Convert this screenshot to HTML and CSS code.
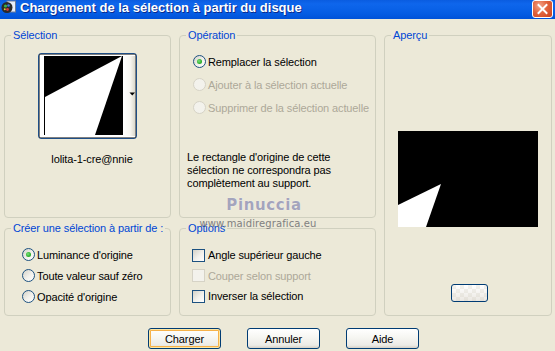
FILE: index.html
```html
<!DOCTYPE html>
<html lang="fr">
<head>
<meta charset="utf-8">
<title>Chargement de la sélection à partir du disque</title>
<link rel="stylesheet" href="styles.css">
</head>
<body>
<div class="window">
  <div class="titlebar">
    <svg class="app-icon" viewBox="0 0 15 14" width="15" height="14">
      <rect x="6" y="1" width="8.5" height="11" fill="#e8eef8" stroke="#6c7d9a" stroke-width="1"/>
      <circle cx="6" cy="7.5" r="5.5" fill="#2a2a2a"/>
      <circle cx="4.5" cy="6" r="1.6" fill="#37b34a"/>
      <circle cx="7.5" cy="5.5" r="1.3" fill="#3c7be0"/>
      <circle cx="6.5" cy="9.5" r="1.4" fill="#d23a3a"/>
      <circle cx="3.8" cy="9.2" r="1" fill="#e6c531"/>
    </svg>
    <span class="title">Chargement de la sélection à partir du disque</span>
    <span class="close">
      <svg viewBox="0 0 21 18" width="21" height="18">
        <path d="M6 4.5 L15 13.5 M15 4.5 L6 13.5" stroke="#fff" stroke-width="2.2" stroke-linecap="square"/>
      </svg>
    </span>
  </div>

  <div class="main">
    <div class="groups">
      <fieldset class="group sel">
        <legend>Sélection</legend>
        <div class="thumb">
          <svg viewBox="0 0 97 84" width="97" height="84">
            <defs>
              <linearGradient id="strip" x1="0" x2="1" y1="0" y2="0">
                <stop offset="0" stop-color="#ffffff"/>
                <stop offset="0.6" stop-color="#f7f6f1"/>
                <stop offset="1" stop-color="#dcd9cc"/>
              </linearGradient>
            </defs>
            <rect x="84" y="2" width="12" height="80" fill="url(#strip)"/>
            <rect x="5" y="2" width="79" height="79" fill="#000"/>
            <polygon points="6,43 83,2 56,81 6,81" fill="#fff"/>
            <polygon points="90.5,38.5 96,38.5 93.25,41.5" fill="#000"/>
            <rect x="0.5" y="0.5" width="96" height="83" fill="none" stroke="#000" stroke-width="1" stroke-dasharray="1 1"/>
          </svg>
        </div>
        <div class="thumb-name">lolita-1-cre@nnie</div>
      </fieldset>

      <fieldset class="group op">
        <legend>Opération</legend>
        <div class="opts op-opts">
          <div class="opt checked"><span class="rb"></span>Remplacer la sélection</div>
          <div class="opt disabled"><span class="rb"></span>Ajouter à la sélection actuelle</div>
          <div class="opt disabled"><span class="rb"></span>Supprimer de la sélection actuelle</div>
        </div>
        <p class="note">Le rectangle d'origine de cette<br>sélection ne correspondra pas<br>complètement au support.</p>
      </fieldset>

      <fieldset class="group preview">
        <legend>Aperçu</legend>
        <svg class="preview-img" viewBox="0 0 140 96" width="140" height="96">
          <rect width="140" height="96" fill="#000"/>
          <polygon points="0,74 43,53 28,96 0,96" fill="#fff"/>
        </svg>
        <span class="btn mini"></span>
      </fieldset>

      <fieldset class="group create">
        <legend>Créer une sélection à partir de :</legend>
        <div class="opts create-opts">
          <div class="opt checked"><span class="rb"></span>Luminance d'origine</div>
          <div class="opt"><span class="rb"></span>Toute valeur sauf zéro</div>
          <div class="opt"><span class="rb"></span>Opacité d'origine</div>
        </div>
      </fieldset>

      <fieldset class="group options">
        <legend>Options</legend>
        <div class="opts check-opts">
          <div class="opt"><span class="cb"></span>Angle supérieur gauche</div>
          <div class="opt disabled"><span class="cb"></span>Couper selon support</div>
          <div class="opt"><span class="cb"></span>Inverser la sélection</div>
        </div>
      </fieldset>
    </div>

    <div class="buttons">
      <span class="btn default">Charger</span>
      <span class="btn">Annuler</span>
      <span class="btn">Aide</span>
    </div>
  </div>

  <div class="watermark">
    <span class="wm-name">Pinuccia</span>
    <span class="wm-url">www.maidiregrafica.eu</span>
  </div>
</div>
</body>
</html>
```

FILE: styles.css
```css
html, body {
  margin: 0;
  padding: 0;
  background: #ECE9D8;
}

body {
  font-family: "Liberation Sans", Arial, sans-serif;
  font-size: 11px;
  letter-spacing: -0.12px;
  color: #000;
}

.window {
  width: 555px;
  height: 351px;
  overflow: hidden;
  position: relative;
  background: #ECE9D8;
}

/* ---------- Title bar ---------- */
.titlebar {
  height: 19px;
  display: flex;
  align-items: flex-start;
  background: linear-gradient(to bottom,
    #0A5CE0 0%, #0E66EC 20%, #0A62E8 45%, #045BE2 75%, #0052D8 100%);
  color: #fff;
}

.app-icon {
  flex: none;
  margin: 0 4px 0 1px;
}

.title {
  font-family: "Liberation Sans", Arial, sans-serif;
  font-weight: bold;
  font-size: 13px;
  line-height: 15px;
  letter-spacing: 0;
  white-space: nowrap;
  text-shadow: 1px 1px 0 #0A2B8C;
}

.close {
  flex: none;
  margin-left: auto;
  margin-right: 2px;
  width: 21px;
  height: 18px;
  box-sizing: border-box;
  border: 1px solid #fff;
  border-radius: 3px;
  background: radial-gradient(circle at 35% 30%, #F4A58B 0%, #E2643E 45%, #C9401A 100%);
  display: flex;
}

.close svg {
  width: 19px;
  height: 16px;
}

/* ---------- Main layout ---------- */
.main {
  padding: 10px 3px 0 4px;
}

.groups {
  display: grid;
  grid-template-columns: 167px 197px 168px;
  grid-template-rows: 189px 94px;
  column-gap: 8px;
  row-gap: 4px;
}

.group {
  margin: 0;
  padding: 0;
  min-width: 0;
  border: 1px solid #D0D0BF;
  border-radius: 4px;
  box-sizing: border-box;
}

.group legend {
  margin-left: 6px;
  padding: 0 2px;
  font-size: 11px;
  line-height: 13px;
  color: #0046D5;
  white-space: nowrap;
}

.sel { grid-column: 1; grid-row: 1; }
.op { grid-column: 2; grid-row: 1; }
.preview { grid-column: 3; grid-row: 1 / span 2; }
.create { grid-column: 1; grid-row: 2; }
.options { grid-column: 2; grid-row: 2; }

/* ---------- Selection thumbnail ---------- */
.thumb {
  width: 99px;
  height: 86px;
  box-sizing: border-box;
  margin: 11px auto 0;
  border: 1px solid #1E4E86;
  border-radius: 3px;
  background: #fff;
  display: flex;
}

.thumb-name {
  margin-top: 14px;
  text-align: center;
  padding-left: 9px;
  line-height: 13px;
}

/* ---------- Radio / checkbox options ---------- */
.opts {
  display: flex;
  flex-direction: column;
}

.opt {
  display: flex;
  align-items: center;
  gap: 2px;
  white-space: nowrap;
}

.op-opts {
  padding: 8px 0 0 13px;
}

.op-opts .opt {
  height: 23px;
}

.create-opts {
  padding: 9px 0 0 17px;
}

.create-opts .opt {
  height: 21px;
}

.check-opts {
  padding: 10px 0 0 12px;
}

.check-opts .opt {
  height: 20.5px;
  gap: 3px;
}

.rb {
  flex: none;
  position: relative;
  width: 13px;
  height: 13px;
  box-sizing: border-box;
  border: 1px solid #1C5180;
  border-radius: 50%;
  background: linear-gradient(135deg, #D4D2C8 0%, #F2F1EC 55%, #FFFFFF 100%);
}

.checked .rb::after {
  content: "";
  position: absolute;
  left: 3px;
  top: 3px;
  width: 5px;
  height: 5px;
  border-radius: 50%;
  background: radial-gradient(circle at 40% 40%, #7BE07B 0%, #2DB02D 60%, #1E8E1E 100%);
}

.cb {
  flex: none;
  width: 13px;
  height: 13px;
  box-sizing: border-box;
  border: 1px solid #1C5180;
  background: linear-gradient(135deg, #D4D2C8 0%, #F2F1EC 55%, #FFFFFF 100%);
}

.disabled {
  color: #ACA899;
}

.disabled .rb,
.disabled .cb {
  border-color: #D6D3C6;
  background: #F3F2EC;
}

.note {
  margin: 32px 0 0 7px;
  line-height: 13px;
}

/* ---------- Preview ---------- */
.preview {
  display: flex;
  flex-direction: column;
  align-items: center;
}

.preview-img {
  margin-top: 89px;
  flex: none;
}

/* ---------- Buttons ---------- */
.btn {
  box-sizing: border-box;
  display: flex;
  align-items: center;
  justify-content: center;
  width: 73px;
  height: 21px;
  border: 1px solid #003C74;
  border-radius: 3px;
  background: linear-gradient(to bottom, #FFFFFF 0%, #F7F7F3 40%, #ECEBE6 85%, #D6D0C5 100%);
  font-size: 11px;
  color: #000;
}

.btn.default {
  box-shadow: inset 0 0 0 1px #FFE7A2, inset 0 0 0 2px #F6B24A;
}

.btn.mini {
  width: 37px;
  height: 18px;
  margin: 57px 0 0 3px;
  background:
    linear-gradient(to bottom, rgba(255,255,255,0.2), rgba(214,208,197,0.5)),
    repeating-conic-gradient(#FFFFFF 0 25%, #F0EFEA 0 50%) 0 0 / 8px 8px;
}

.buttons {
  display: flex;
  gap: 26px;
  padding: 12px 0 0 144px;
}

/* ---------- Watermark overlay ---------- */
.watermark {
  position: absolute;
  left: 196px;
  top: 196px;
  width: 124px;
  display: flex;
  flex-direction: column;
  align-items: center;
  pointer-events: none;
}

.wm-name {
  font-family: "DejaVu Sans", Verdana, sans-serif;
  font-weight: bold;
  font-size: 15px;
  line-height: 18px;
  letter-spacing: 0.6px;
  color: #A4A4BC;
  text-shadow: 0 0 1px #fff;
  padding-left: 12px;
}

.wm-url {
  font-family: "DejaVu Sans", Verdana, sans-serif;
  font-size: 10px;
  line-height: 12px;
  letter-spacing: 0.1px;
  margin-top: 4px;
  color: #808080;
}
```
